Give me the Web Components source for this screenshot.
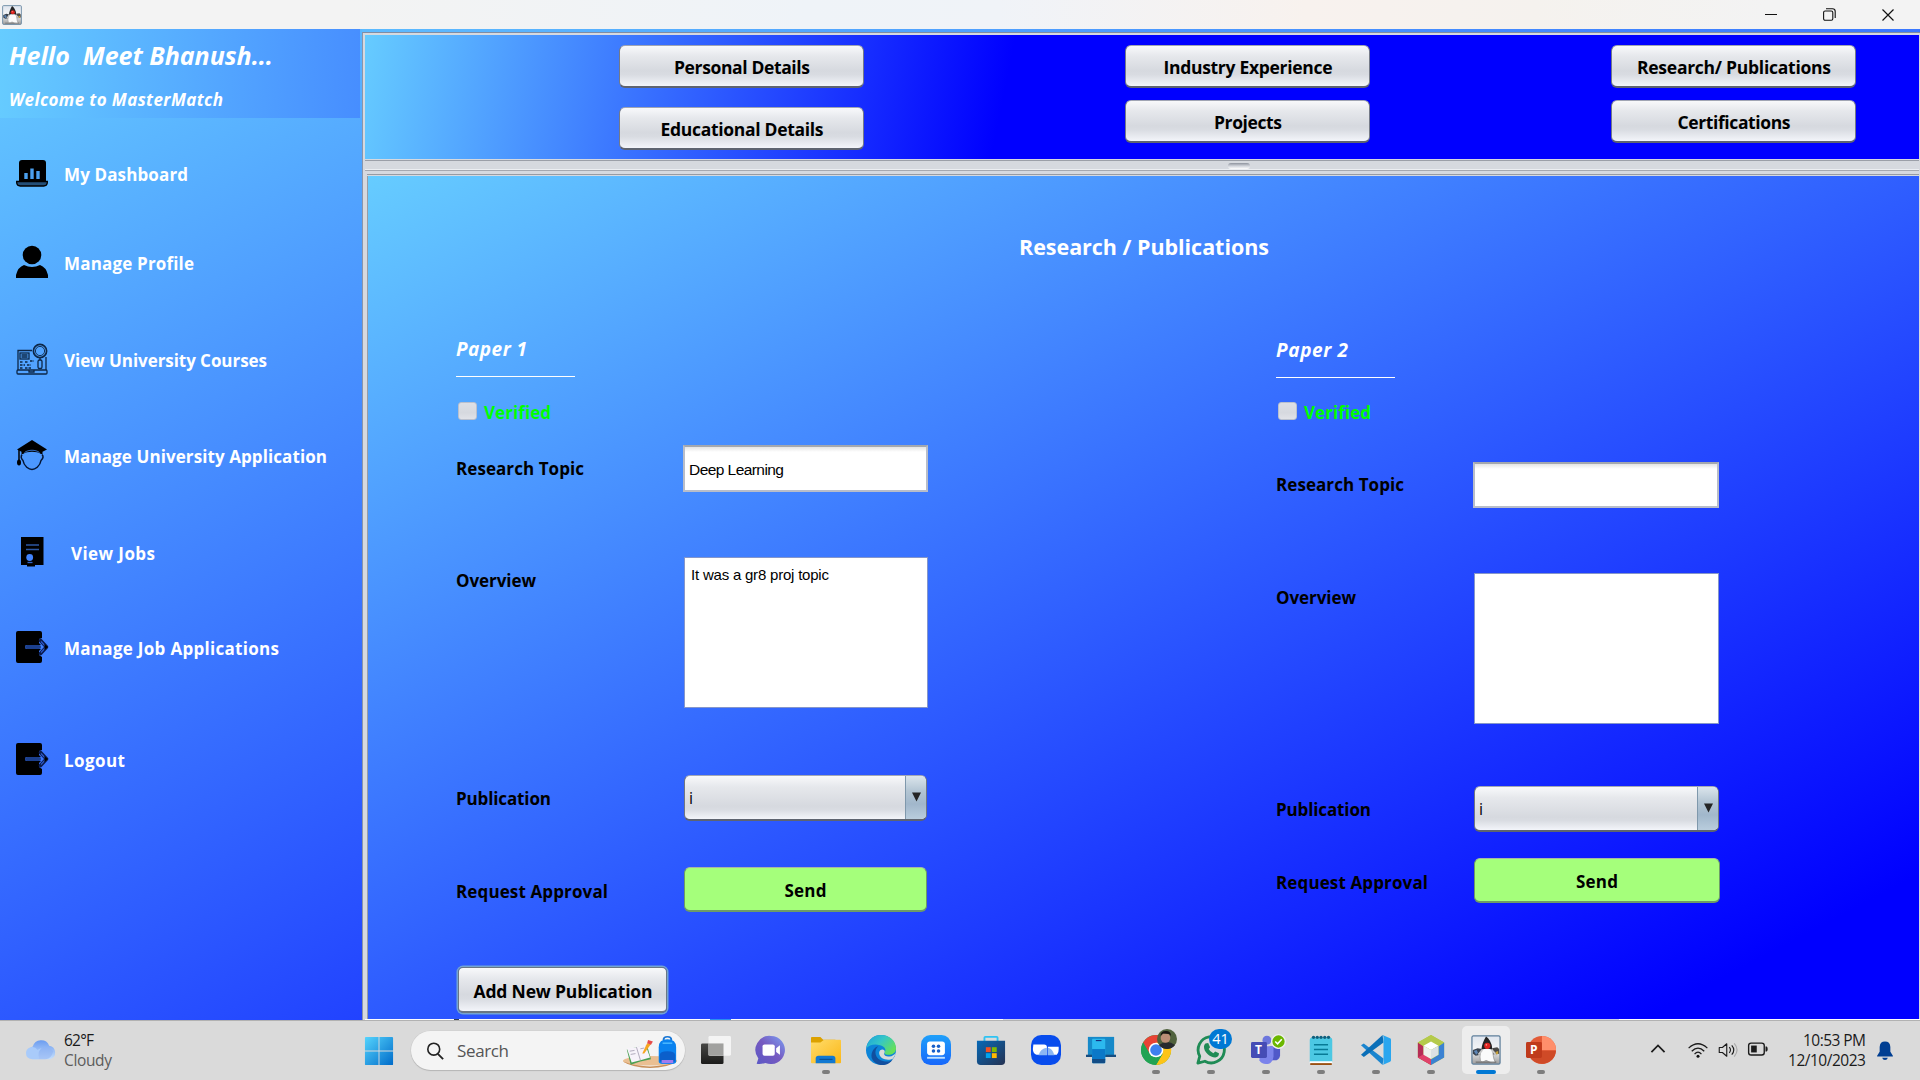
<!DOCTYPE html>
<html lang="en">
<head>
<meta charset="utf-8">
<title>MasterMatch</title>
<style>
html,body{margin:0;padding:0}
body{width:1920px;height:1080px;overflow:hidden;font-family:"Open Sans","Noto Sans",sans-serif;background:#dadada}
</style>
</head>
<body>
<master-app></master-app>
<script>
const define = (name, html, after) => customElements.define(name, class extends HTMLElement {
  connectedCallback() {
    if (this.shadowRoot) return;
    const t = document.createElement('template');
    t.innerHTML = typeof html === 'function' ? html(this) : html;
    this.attachShadow({mode: 'open'}).appendChild(t.content.cloneNode(true));
    if (after) after(this);
  }
});

/* Text run whose letter spacing is tuned so that it spans the given width. */
define('fit-text', '<style>:host{display:block;white-space:pre;line-height:24px;flex:none}span{display:inline-block}</style><span><slot></slot></span>', el => {
  const span = el.shadowRoot.querySelector('span');
  const w = +el.getAttribute('w');
  const n = el.textContent.length;
  const nat = span.getBoundingClientRect().width;
  if (n > 1) span.style.letterSpacing = ((w - nat) / (n - 1)) + 'px';
  el.style.width = w + 'px';
});

const duke = `<defs><linearGradient id="dk" x1="0" y1="0" x2="0" y2="1"><stop offset="0" stop-color="#dfe5ee"/><stop offset=".5" stop-color="#f4f5f6"/><stop offset="1" stop-color="#9b9b9b"/></linearGradient></defs>
<rect x="1" y="1" width="30" height="30" rx="1.500" fill="url(#dk)" stroke="#5e7f9b" stroke-width="1.300"/>
<path d="M2 16l5-2 5 1-2 6-5 1-3-2z" fill="#39434f"/><path d="M22 14l6-1 2 2v5l-6 1z" fill="#4b4a47"/>
<path d="M3 17l3-1 1.500 3-2 2z" fill="#5d86b5"/><path d="M26 18l3-1v3l-2 1z" fill="#c9a23a"/>
<path d="M12 13c-2 5-3 9-2 14 2 3 4 1 6 0 3 1 6 4 10 2-3-4-2-11-4-16z" fill="#fbfbfb" stroke="#8c8c8c" stroke-width=".7"/>
<path d="M12 16l-4 5M22 16l3 3 2 4" stroke="#c9c9c9" stroke-width="2" fill="none"/>
<path d="M16 1.500c2 1 5 5 6 9 .6 2 .5 4 .3 5-3-1-7-1-11 0 0-5 2-9 4.700-14z" fill="#232323"/>
<circle cx="17.300" cy="11.500" r="3.300" fill="#de241f"/><circle cx="16.400" cy="10.500" r=".9" fill="#ff8d80"/><path d="M5 29h22" stroke="#666" stroke-width="1.500" opacity=".7"/>`;

const exit = `<path d="M2 0h22q2 0 2 2v5l-3 1v4l2 2H10q-2 2 0 4h15l-2 2v4l3 2v4q0 2-2 2H2q-2 0-2-2V2q0-2 2-2z" fill="#000"/>
<rect x="9" y="14" width="16" height="4" rx="2" fill="#1c3f8c"/><path d="M24.500 9.500L30.500 16l-6 6.500" fill="none" stroke="#0a1a4d" stroke-width="3.600" stroke-linecap="round" stroke-linejoin="round"/><path d="M25 10.500L30 16l-5 5.500" fill="none" stroke="#2b57c8" stroke-width="1.200"/><path d="M28.500 13l3.500 3-3.500 3z" fill="#000"/>`;

const icons = {
 duke,
 exit,
 dash: `<path d="M6 3h21q3 0 3 3v18H3V6q0-3 3-3z" fill="#000"/><path d="M10 16v6M16 11.500v10.500M22 14v8" stroke="#4ba0ef" stroke-width="3.400"/><path d="M.7 24.500h30.600v1.500q-.5 3-3.500 3H4.200q-3 0-3.500-3z" fill="#234f78" stroke="#000" stroke-width="1.300"/>`,
 user: `<circle cx="16" cy="9" r="9.300" fill="#000"/><path d="M0 32v-3q2-8 8-10 8 4 16 0 6 2 8 10v3z" fill="#000"/>`,
 courses: `<g fill="none" stroke="#0d2747" stroke-width="1.300"><path d="M2 27V7.500h14M30 14v13"/><rect x="4" y="10" width="9" height="6"/><path d="M5.500 12h6M5.500 14h6" /><path d="M4 19h3M9 19h3M14 18h4M4 22h5M11 22h4M4 25h3M9 25h6" stroke-dasharray="2.500 1"/><rect x="1" y="27" width="30" height="4" rx="1"/><path d="M13 27v2h5v-2"/><circle cx="24" cy="8" r="6.600" stroke-width="1.700"/><circle cx="24" cy="8" r="4.600" stroke-width=".9"/><path d="M24 15v2"/><rect x="22" y="17" width="4" height="8.500" rx="1.600"/></g>`,
 grad: `<path d="M16 1L31 10.500l-4.500 2.200V15H25c-4-3-14-3-18 0H5.500v-2.200L1 10.500z" fill="#000"/><path d="M8.500 13.500c4-3 11-3 15 0" stroke="#4188f0" stroke-width=".8" fill="none"/><path d="M6 15.500c-2 3 0 5 1 6 1 6 6 9 9 9s8-3 9-9c2-2 3-4 1-6" fill="none" stroke="#041535" stroke-width="1.500"/><path d="M3 11v11" stroke="#000" stroke-width="1.500"/><ellipse cx="3" cy="23.500" rx="2" ry="3" fill="#000"/>`,
 cert: `<path d="M5 1h22.500v28H19v1.500h-8V29H5z" fill="#000"/><path d="M10 9h13M10 13.500h13" stroke="#2c57a3" stroke-width="1.500"/><circle cx="13.700" cy="21.500" r="3.400" fill="#4184ff"/><path d="M11.500 26.500h5" stroke="#3466c5" stroke-width="1.300"/>`,
 cloud: `<defs><linearGradient id="cl" x1="0" y1="0" x2="0" y2="1"><stop offset="0" stop-color="#6b9cf0"/><stop offset="1" stop-color="#c4defc"/></linearGradient></defs><path d="M8 26a7 7 0 0 1 0-13 9 9 0 0 1 17-1 7.200 7.200 0 0 1 1 14z" fill="url(#cl)"/><path d="M1 19.500a6.500 6.500 0 0 1 12-3q2-2 4-1.500-4 2-3 11H8q-7-.5-7-6.500z" fill="#a9cbfa"/><path d="M14 22q0-8 8-8 5 0 7 4-2 8-8 8h-7z" fill="#8fb3f2" opacity=".55"/>`,
 start: `<defs><linearGradient id="st" x1="0" y1="0" x2="1" y2="1"><stop offset="0" stop-color="#55d4fd"/><stop offset="1" stop-color="#006bc9"/></linearGradient></defs><path d="M2 1h13.500v14.500H1V2q0-1 1-1zM16.500 1H30q1 0 1 1v13.500H16.500zM1 16.500h14.500V31H2q-1 0-1-1zM16.500 16.500H31V30q0 1-1 1H16.500z" fill="url(#st)"/>`,
 lens: `<circle cx="14" cy="13" r="9.500" fill="none" stroke="#222" stroke-width="2.600"/><path d="M20.500 20.500L29 29" stroke="#222" stroke-width="3"/>`,
 task: `<defs><linearGradient id="tv" x1="0" y1="0" x2="0" y2="1"><stop offset="0" stop-color="#474745"/><stop offset="1" stop-color="#1b1b1a"/></linearGradient></defs><rect x="0" y="9" width="24" height="22" rx="1.500" fill="url(#tv)"/><rect x="8" y="1" width="24" height="21" rx="1.500" fill="#f4f4f4"/><path d="M8 9h16v13H8z" fill="#a1a19f"/>`,
 chat: `<defs><linearGradient id="ch" x1="1" y1="0" x2="0" y2="1"><stop offset="0" stop-color="#7ba0f4"/><stop offset=".5" stop-color="#7659c0"/><stop offset="1" stop-color="#5a58c6"/></linearGradient></defs><path d="M16 1a15 15 0 1 1-6 28.800Q5 31.500.7 30.700L2.500 25A15 15 0 0 1 16 1z" fill="url(#ch)"/><rect x="7" y="10" width="13" height="12" rx="2" fill="#fff"/><path d="M21.500 14l4-3v10l-4-3z" fill="#fff"/>`,
 folder: `<defs><linearGradient id="fo" x1="0" y1="0" x2="1" y2="1"><stop offset="0" stop-color="#ffdc6b"/><stop offset="1" stop-color="#fbb717"/></linearGradient></defs><path d="M0 3q0-1 1-1h9l3 3h13v6H0z" fill="#dca100"/><path d="M0 8h10l4-3h17q1 0 1 1v23q0 1-1 1H1q-1 0-1-1z" fill="url(#fo)"/><path d="M5 30v-5q0-3 3-3h15q3 0 3 3v5z" fill="#1279d2"/><path d="M9 26h14" stroke="#0a4f96" stroke-width="1.200"/>`,
 edge: `<defs><linearGradient id="ed" x1="0" y1="0" x2="1" y2=".6"><stop offset="0" stop-color="#1aa0dc"/><stop offset=".5" stop-color="#35c6c7"/><stop offset="1" stop-color="#65e05a"/></linearGradient></defs><circle cx="16" cy="16" r="16" fill="#0c84d8"/><path d="M1 11C4 3 10 0 16 0c9 0 16 6 16 14 0 5-4 7-8 7-4 0-5-2-4-3 2-2 0-6-5-7C9 9 3 11 .5 14z" fill="url(#ed)"/><path d="M13 12c-5 4-4 14 6 16 5 1 8 0 10-3-5 10-20 9-23-1-1-6 3-11 7-12z" fill="#114f9f"/><path d="M20 18c-2 3 1 5 5 5 3 0 5-2 7-4-1 3-2 4-3 6-5 3-15 1-15-6 0-4 6-5 6-1z" fill="#dadada"/>`,
 grid: `<defs><linearGradient id="gr" x1="0" y1="0" x2="0" y2="1"><stop offset="0" stop-color="#1fa0fa"/><stop offset="1" stop-color="#1767fb"/></linearGradient></defs><rect width="32" height="32" rx="10" fill="url(#gr)"/><rect x="6.500" y="7" width="19" height="14.500" rx="3" fill="#fff"/><g fill="#175fc9"><circle cx="13.300" cy="12" r="1.900"/><circle cx="18.700" cy="12" r="1.900"/><circle cx="13.300" cy="17" r="1.900"/><circle cx="18.700" cy="17" r="1.900"/></g><path d="M6.500 24.300h19" stroke="#bfe0ff" stroke-width="2"/>`,
 store: `<defs><linearGradient id="so" x1="0" y1="0" x2="1" y2="1"><stop offset="0" stop-color="#0669b7"/><stop offset="1" stop-color="#253252"/></linearGradient></defs><path d="M9 8V3q0-1 1-1h12q1 0 1 1v5" fill="none" stroke="#2fc3f3" stroke-width="2"/><path d="M1 6h30v22q0 4-4 4H5q-4 0-4-4z" fill="url(#so)"/><path d="M10.500 13h5.200v5.200h-5.200z" fill="#f25022"/><path d="M16.900 13h5.200v5.200h-5.200z" fill="#7fba00"/><path d="M10.500 19.400h5.200v5.200h-5.200z" fill="#00a4ef"/><path d="M16.900 19.400h5.200v5.200h-5.200z" fill="#ffb900"/>`,
 zoomer: `<rect width="32" height="32" rx="11" fill="#084ced"/><path d="M2.500 10H14q3 0 3 3v8H6q-4-1-4-6zM18 12.500h11.500q.5 6-2 8.500H18z" fill="#fff"/><path d="M8 21.500q2-7 9-8v8zM18 13.500q5 1 7 8h-7z" fill="#8bb6f3"/>`,
 phone: `<path d="M2 2h28v20H2z" fill="#1689c9"/><path d="M0 21h32v2.500H0z" fill="#174d80"/><path d="M6.500 5q0-1 1-1h12q1 0 1 1v24q0 1-1 1h-12q-1 0-1-1z" fill="#2cb9ee"/><path d="M6.500 15h14v12h-14z" fill="#0b78c8"/><path d="M6.500 25.500h14V29q0 1-1 1h-12q-1 0-1-1z" fill="#124c86"/><path d="M10.500 6h6" stroke="#116" stroke-width="1"/>`,
 chrome: `<circle cx="16" cy="16" r="16" fill="#21a353"/><path d="M16 16L2.200 8A16 16 0 0 1 30 8z" fill="#e94335"/><path d="M16 8h14A16 16 0 0 1 16 32l7-12z" fill="#fdc418"/><path d="M2.200 8l7 12 6.800-12z" fill="#e94335"/><path d="M2.200 8A16 16 0 0 0 16 32l7-12H9.200z" fill="#21a353"/><circle cx="16" cy="16" r="7.800" fill="#fff"/><circle cx="16" cy="16" r="6.200" fill="#3d80ee"/>`,
 whatsapp: `<path d="M2 30l2-7.500A14 14 0 1 1 9.500 28z" fill="none" stroke="#1f8b55" stroke-width="3" stroke-linejoin="round"/><path d="M10 9l3-.5 2 4.500-1.500 2q1.500 3 5 4.500l2-2 4 2q0 4-4 4.500C15 24 8 18 8.500 12q.3-2 1.500-3z" fill="#1f8b55"/>`,
 teams: `<circle cx="17" cy="5.500" r="4.800" fill="#6d77dd"/><path d="M20 12h9q2 0 2 2v8q-1 5-6 5h-5z" fill="#5059c9"/><path d="M10 12h14v11q-1 8-8 8-5 0-7-4z" fill="#7b83eb"/><rect x="0" y="7.500" width="17" height="17" rx="1.500" fill="#454cb5"/>`,
 notepad: `<rect x="4" y="3" width="24" height="27" rx="2" fill="#4cc8e3"/><path d="M4 28h24v2q-1 1-2 1H6q-2 0-2-1z" fill="#fff"/><path d="M4.500 31h23" stroke="#9a5011" stroke-width="2"/><g fill="#0f607d"><circle cx="8" cy="2.500" r="1.800"/><circle cx="12" cy="2.500" r="1.800"/><circle cx="16" cy="2.500" r="1.800"/><circle cx="20" cy="2.500" r="1.800"/><circle cx="24" cy="2.500" r="1.800"/></g><path d="M8.500 10.500h15M8.500 15.500h15M8.500 20.500h15" stroke="#077a96" stroke-width="1.600"/>`,
 code: `<path d="M0 11l3-2 21 16-1 7z" fill="#1a85cf"/><path d="M0 21l3 2.500L24 8l-1-8z" fill="#0a6fb8"/><path d="M23 0l8 3.500q1 .5 1 1.500v22q0 1-1 1.500L23 32q1-1 1-2V2q0-1-1-2z" fill="#29a6ef"/>`,
 netbeans: `<path d="M16 0l14 8v16l-14 8-14-8V8z" fill="#a6c83c"/><path d="M2 8l6 4v9l8 5v6L2 24z" fill="#b52d55"/><path d="M8 20.500l8 5V32L2 24z" fill="#e0426a"/><path d="M30 8v16l-14 8v-6l8-5v-9z" fill="#3b82d2"/><path d="M16 0l14 8-6 4-8-4-8 4-6-4z" fill="#b5ca4b"/><path d="M16 7l8 4.500L16 16 8 11.500z" fill="#fff"/><path d="M8 11.500l8 4.500v9.500l-8-4.500z" fill="#eef1ec"/><path d="M24 11.500L16 16v9.500l8-4.500z" fill="#dce1e4"/>`,
 ppt: `<circle cx="17" cy="16" r="15" fill="#e25b37"/><path d="M17 1a15 15 0 0 1 15 15H17z" fill="#ff8f6b"/><path d="M2.500 17H32a15 15 0 0 1-29 4z" fill="#cf4a27"/><rect x="0" y="7.500" width="17" height="17" rx="1.500" fill="#bf3a1b"/>`,
 school: `<ellipse cx="30" cy="31" rx="28" ry="6" fill="#eabf92"/><path d="M2 32q28 12 56 0-10 8-28 8T2 32z" fill="#c98f58"/><path d="M6 17l10-3 11-2 4 17-11 3-10 4z" fill="#4aa052"/><path d="M6 15l10-1 9-4 5 17-9 3-10 3z" fill="#f7f3fa"/><path d="M16 14l4 16M9 19l5-1M10 23l5-1M20 16l4-1" stroke="#a9a3b5"/><path d="M22 22l5-13 4 1-7 12z" fill="#f6a520"/><path d="M27 9l1-4 5 2-2 4z" fill="#e74c4b"/><path d="M44 5q0-4 4-4t4 4" fill="none" stroke="#1976d4" stroke-width="2"/><path d="M39 14q0-10 9-10t9 10v18q0 3-4 3H43q-4 0-4-3z" fill="#0a82ef"/><path d="M40 24q0-5 8-5t8 5v8H40z" fill="#0b5fcb"/><path d="M42 30h12v4H42z" fill="#a07cf0"/><path d="M43 9h10" stroke="#45b5ff" stroke-width="2"/>`,
 wifi: `<g fill="none" stroke="#1b1b1b" stroke-width="2"><path d="M1 13q15-14 30 0M6 18q10-10 20 0M10.500 22.500q5.500-6 11 0"/></g><circle cx="16" cy="26" r="2.400" fill="#111"/>`,
 speaker: `<g fill="none" stroke="#1b1b1b" stroke-width="1.800"><path d="M2 12h5l7-6v20l-7-6H2z" stroke-linejoin="round"/><path d="M18 11.500q4 4.500 0 9M22 8.500q6.500 7.500 0 15"/><path d="M26 5.500q9 10.500 0 21" stroke="#aaa"/></g>`,
 battery: `<rect x="1" y="6.500" width="25" height="19" rx="4" fill="none" stroke="#1b1b1b" stroke-width="2.200"/><rect x="5" y="10.500" width="9" height="11" fill="#1b1b1b"/><path d="M28 12h2q1.500 1 1.500 4t-1.500 4h-2z" fill="#1b1b1b"/>`,
 bell: `<path d="M16 1q9 0 9.500 9v8l4.500 7v1H2v-1l4.500-7v-8Q7 1 16 1z" fill="#003e92"/><path d="M11 28h10q-1 4-5 4t-5-4z" fill="#003e92"/>`,
 chevron: `<path d="M1 23L16 8l15 15" fill="none" stroke="#1b1b1b" stroke-width="4"/>`
};

define('app-icon', el => `<style>:host{display:block;flex:none;width:${el.getAttribute('w')}px;height:${el.getAttribute('h') || el.getAttribute('w')}px}svg{display:block;width:100%;height:100%;overflow:visible}</style>
<svg viewBox="${el.getAttribute('box') || '0 0 32 32'}" preserveAspectRatio="none">${icons[el.getAttribute('name')]}</svg>`);

define('title-bar', `<style>:host{display:flex;height:29px;box-sizing:border-box;padding:0 26px 0 2px;align-items:center;background:linear-gradient(90deg,#f3f3f3 0,#f3f3f3 18%,#eff3f8 42%,#f0f3f8 52%,#f8f2ee 68%,#f5f2ee 80%,#f3f3f3 92%)}
.sp{flex:1}svg{display:block;margin-left:46px}svg.first{margin-left:0}</style>
<app-icon name="duke" w="20"></app-icon><div class="sp"></div>
<svg class="first" width="12" height="12"><path d="M0 5.500h12" stroke="#111"/></svg>
<svg width="13" height="13" fill="none" stroke="#111" stroke-width="1.100"><rect x=".6" y="3" width="9.200" height="9.200" rx="1.500"/><path d="M3 .7h6.500q2.700 0 2.700 2.700V10"/></svg>
<svg width="12" height="12" stroke="#111" stroke-width="1.200"><path d="M.5.5l11 11M11.500.5l-11 11"/></svg>`);

define('nav-item', el => `<style>:host{display:flex;height:32px;align-items:center;color:#fff;font-weight:700;font-size:17px}fit-text{margin-top:4px}</style>
<app-icon name="${el.getAttribute('icon')}" w="32"></app-icon><fit-text style="margin-left:${el.getAttribute('gap') || 16}px" w="${el.getAttribute('w')}">${el.getAttribute('label')}</fit-text>`);

define('side-bar', `<style>:host{display:flex;flex-direction:column;width:362px;height:991px;box-sizing:border-box;background:linear-gradient(152.230deg,#66ccff 0,#0000ff 1550px)}
header{width:360px;height:89px;box-sizing:border-box;padding:3px 0 0 9px;color:#fff;font-weight:700;font-style:italic;background:linear-gradient(94.200deg,#66ccff 0,#0000ff 1193px)}
nav{display:flex;flex-direction:column;padding:39px 0 0 16px}</style>
<header><fit-text w="264" style="font-size:25px;line-height:46px">Hello  Meet Bhanush...</fit-text><fit-text w="214" style="font-size:17px;margin-top:10px">Welcome to MasterMatch</fit-text></header>
<nav>
<nav-item icon="dash" label="My Dashboard" w="124"></nav-item>
<nav-item icon="user" label="Manage Profile" w="130" style="margin-top:57px"></nav-item>
<nav-item icon="courses" label="View University Courses" w="203" style="margin-top:65px"></nav-item>
<nav-item icon="grad" label="Manage University Application" w="263" style="margin-top:64px"></nav-item>
<nav-item icon="cert" gap="23" label="View Jobs" w="84" style="margin-top:65px"></nav-item>
<nav-item icon="exit" label="Manage Job Applications" w="215" style="margin-top:63px"></nav-item>
<nav-item icon="exit" label="Logout" w="61" style="margin-top:80px"></nav-item>
</nav>`);

define('metal-button', el => `<style>:host{display:flex;box-sizing:border-box;justify-content:center;align-items:center;width:245px;height:43px;border-radius:6px;border:1px solid #747a88;border-top-color:#a0a5b3;border-bottom:2px solid #5e6470;background:linear-gradient(#f8f9fb,#e6e8ec 25%,#d6d9df 62%,#d9dce2 72%,#f3f5fa);color:#000;font-weight:700;font-size:17.500px}
:host([green]){background:#a5ff7b;border-color:#6d9b67;border-top-color:#a6b6a6;font-size:17px}
:host([focus]){border-color:#6a7784;box-shadow:0 0 0 1.500px #73a4d1;border-radius:5px}
fit-text{margin:2px 0 0 1px}:host([green]) fit-text{margin-top:3px;margin-left:0}</style><fit-text w="${el.getAttribute('w')}">${el.getAttribute('label')}</fit-text>`);

define('section-tabs', `<style>:host{display:flex;box-sizing:border-box;height:124px;padding:10px 0 0 254px;background:linear-gradient(101.500deg,#66ccff 0,#0000ff 638px)}
.c{display:flex;flex-direction:column;gap:12px;flex:none}</style>
<div class="c" style="gap:19px"><metal-button label="Personal Details" w="136"></metal-button><metal-button label="Educational Details" w="163"></metal-button></div>
<div class="c" style="margin-left:261px"><metal-button label="Industry Experience" w="169"></metal-button><metal-button label="Projects" w="68"></metal-button></div>
<div class="c" style="margin-left:241px"><metal-button label="Research/ Publications" w="194"></metal-button><metal-button label="Certifications" w="113"></metal-button></div>`);

define('combo-box', `<style>:host{display:flex;box-sizing:border-box;width:243px;height:46px;border:1px solid #6f7683;border-top-color:#a3a8b5;border-bottom:2px solid #5e6470;border-radius:6px;overflow:hidden;background:linear-gradient(#f8f9fb,#e6e8ec 25%,#d6d9df 70%,#d9dce2 78%,#f3f5fa)}
.v{flex:1;padding:11px 0 0 4px;font:16px/23px "Open Sans",sans-serif;color:#000}
.a{width:20px;border-left:1px solid #7f98ac;background:linear-gradient(#dbe5ec,#b3c5d3 35%,#a1b7cb 65%,#b9cddd)}
svg{display:block;margin:16px 0 0 6px}</style><div class="v"><slot></slot></div><div class="a"><svg width="10" height="10"><path d="M0 .5h9L4.500 9.500z" fill="#252525"/></svg></div>`);

define('text-field', `<style>:host{display:block;box-sizing:border-box;width:245px;height:47px;padding:12px 0 0 4px;border:2px solid #b8bdc9;border-top-color:#a3a7ae;background:linear-gradient(#e4e4e4,#fff 5px);color:#000;font:15.500px/22px "Liberation Sans",sans-serif}
:host([area]){width:244px;height:151px;padding:8px 0 0 6px;border:1px solid #7888b8;outline:1px solid #93a7de77;outline-offset:-1px;background:#fff;font-size:15px}</style><slot></slot>`);

define('form-row', el => `<style>:host{display:flex;align-items:${el.hasAttribute('top') ? 'flex-start' : 'center'}}.l{flex:none;width:var(--label);font-weight:700;font-size:17px;color:#000}
.l fit-text{margin-top:${el.getAttribute('dy') || 0}px}</style><div class="l"><fit-text w="${el.getAttribute('w')}">${el.getAttribute('label')}</fit-text></div><slot></slot>`);

define('check-mark', `<style>:host{display:flex;height:18px;align-items:center;padding-left:2px;color:#0f0;font-weight:700;font-size:17px}
i{width:19px;height:18px;box-sizing:border-box;border-radius:3px;border:1px solid #b9c0ce;background:linear-gradient(#dddfe5,#d6d9df 60%,#e0e2e8)}fit-text{margin:3px 0 0 7px}</style><i></i><fit-text w="67">Verified</fit-text>`);

define('paper-card', el => { const m = el.getAttribute('gaps').split(','); const right = el.hasAttribute('second'); return `<style>:host{display:flex;flex-direction:column;flex:none}
.t{color:#fff;font-weight:700;font-style:italic;font-size:19px;padding-top:1px}.t fit-text{line-height:28px}
hr{width:119px;height:1px;border:0;background:#fff;margin:0;margin-top:13px}</style>
<div class="t"><fit-text w="${right ? 72 : 71}">${el.getAttribute('name')}</fit-text></div><hr><check-mark style="margin-top:${m[0]}px"></check-mark>
<form-row label="Research Topic" w="128" style="margin-top:${m[1]}px"><text-field style="${right ? 'width:246px;height:46px' : ''}">${el.getAttribute('topic') ? `<fit-text w="95" style="line-height:22px">${el.getAttribute('topic')}</fit-text>` : ''}</text-field></form-row>
<form-row top dy="${right ? 13 : 12}" label="Overview" w="80" style="margin-top:${m[2]}px"><text-field area style="margin-left:1px;${right ? 'width:245px' : ''}">${el.getAttribute('overview') ? `<fit-text w="138" style="line-height:18px">${el.getAttribute('overview')}</fit-text>` : ''}</text-field></form-row>
<form-row dy="2" label="Publication" w="95" style="margin-top:${m[3]}px"><combo-box style="margin-left:1px;${right ? 'width:245px' : ''}">i</combo-box></form-row>
<form-row dy="4" label="Request Approval" w="152" style="margin-top:${m[4]}px"><metal-button green label="Send" w="42" style="margin-left:1px;width:${right ? 246 : 243}px;height:45px"></metal-button></form-row>`; });

define('publications-panel', `<style>:host{display:flex;flex-direction:column;box-sizing:border-box;height:843px;overflow:hidden;padding-left:88px;background:linear-gradient(152.230deg,#66ccff 0,#0000ff 1341px)}
.h{color:#fff;font-weight:700;font-size:21.500px;margin:56px 0 0 563px}
.h fit-text{line-height:30px}
.cols{display:flex;align-items:flex-start;margin-top:72px;height:633px}
</style>
<div class="h"><fit-text w="250">Research / Publications</fit-text></div>
<div class="cols"><paper-card name="Paper 1" topic="Deep Learning" overview="It was a gr8 proj topic" gaps="25,25,65,67,46" style="--label:227px;width:820px"></paper-card>
<paper-card second name="Paper 2" gaps="24,42,65,62,26" style="--label:197px;margin-top:1px"></paper-card></div>
<metal-button focus label="Add New Publication" w="179" style="width:209px;height:46px;margin-left:2px;flex:none"></metal-button>`);

define('split-pane', `<style>:host{display:flex;flex-direction:column;box-sizing:border-box;width:1558px;height:991px;padding-top:3px;background:linear-gradient(90deg,#5cbaff,#3a78ff)}
.f{display:flex;flex-direction:column;flex:1;box-sizing:border-box;border-left:1px solid #8995ab;border-top:1px solid #7f8da6;background:#d6d9df;padding:2px 1px 0 2px}
.d{display:flex;flex-direction:column;align-items:center;height:17px;box-sizing:border-box}
.d .a{width:100%;height:1px;background:#9b9fa8;margin-top:1px}.d .g{width:22px;height:6px;margin:2px 0 0 193px;border-radius:3px;background:linear-gradient(#8e939e,#d0d3da 50%,#fff)}
.d .b{width:100%;height:1px;background:#a5a8b0;box-shadow:0 -1px #eceef2;margin-top:1px}
.d .c{height:1px;background:#979ba4;margin:3px 0 0 2px;width:calc(100% - 2px)}
.m{border-left:1px solid #989ca5;margin-left:2px}
.z{height:1px;margin-right:-1px;background:linear-gradient(90deg,#fff 0 89px,#333c50 89px 94px,#fff 94px 345px,#2a8ef0 345px 366px,#fff 366px 638px,#ccd2e6 638px 1254px,#fff 1254px)}</style>
<div class="f"><section-tabs></section-tabs><div class="d"><div class="a"></div><div class="g"></div><div class="b"></div><div class="c"></div></div><div class="m"><publications-panel></publications-panel></div><div class="z"></div></div>`);

define('task-item', el => `<style>:host{display:flex;flex-direction:column;align-items:center;width:55px;height:60px;flex:none;position:relative}
.t{display:flex;flex-direction:column;align-items:center;width:48px;height:48px;box-sizing:border-box;margin-top:6px;padding-top:9px;border-radius:5px}
:host([active]) .t{background:#ededed}
i{display:block;width:8px;height:4px;border-radius:2px;background:#7d7d7d;margin-top:5px}
:host([active]) i{width:20px;background:#0078d4}:host([quiet]) i{visibility:hidden}
::slotted(*){position:absolute}</style><div class="t"><app-icon name="${el.getAttribute('icon')}" w="30"></app-icon><i></i></div><slot></slot>`);

define('task-bar', `<style>:host{display:flex;box-sizing:border-box;height:60px;border-top:1px solid #b2b2b2;background:#dadada;align-items:flex-start;color:#1a1a1a;font-size:15.500px}
.w{display:flex;width:364px;padding:9px 0 0 25px;box-sizing:border-box}.w app-icon{margin-top:4px}.w div{margin:0 0 0 8px}.w fit-text,.clk fit-text{line-height:20px}
.start{margin-top:15px}
.s{display:flex;align-items:center;width:274px;height:39px;margin:10px 0 0 17px;border-radius:20px;background:#f4f4f4;box-shadow:0 1px 1px #b5b5b5,0 0 0 .5px #ccc;padding-left:14px;box-sizing:border-box;color:#555;font-size:17px}
.apps{display:flex;margin:-1px 0 0 3px}
.tray{display:flex;flex:1}
.n{width:23px;height:20px;border-radius:10px;background:#0078d4;color:#fff;font-size:14.500px;line-height:20px;text-align:center;left:26px;top:9px}
.face{width:20px;height:20px;left:29px;top:9px}.ok{width:15px;height:15px;left:33px;top:14px}
.T{color:#fff;font-weight:700;font-size:12px;line-height:16px;left:17px;top:22px}</style>
<div class="w"><app-icon name="cloud" w="31"></app-icon><div><fit-text w="30">62°F</fit-text><fit-text w="48" style="color:#5c5c5c">Cloudy</fit-text></div></div>
<app-icon class="start" name="start" w="30"></app-icon>
<div class="s"><app-icon name="lens" w="20"></app-icon><fit-text w="52" style="margin-left:12px">Search</fit-text><app-icon name="school" w="59" h="32" box="0 0 61 40" style="margin:3px 0 0 112px"></app-icon></div>
<div class="apps">
<task-item icon="task" quiet></task-item><task-item icon="chat" quiet></task-item><task-item icon="folder"></task-item><task-item icon="edge" quiet></task-item><task-item icon="grid" quiet></task-item><task-item icon="store" quiet></task-item><task-item icon="zoomer" quiet></task-item><task-item icon="phone" quiet></task-item>
<task-item icon="chrome"><svg class="face" viewBox="0 0 20 20"><circle cx="10" cy="10" r="10" fill="#50623d"/><path d="M2 16q8-6 16 0-3 4-8 4t-8-4z" fill="#272a2e"/><circle cx="8.500" cy="9" r="4.800" fill="#bb8d75"/><path d="M3.500 7q0-5 5.500-5 5 0 5 5l-2-2-6-.500z" fill="#181512"/></svg></task-item>
<task-item icon="whatsapp"><span class="n">41</span></task-item>
<task-item icon="teams"><span class="T">T</span><svg class="ok" viewBox="0 0 16 16"><circle cx="8" cy="8" r="7.300" fill="#6bb700" stroke="#eee" stroke-width="1.500"/><path d="M4.500 8l2.500 2.500 4.500-5" fill="none" stroke="#fff" stroke-width="1.600"/></svg></task-item>
<task-item icon="notepad"></task-item><task-item icon="code"></task-item><task-item icon="netbeans"></task-item><task-item icon="duke" active></task-item>
<task-item icon="ppt"><span class="T">P</span></task-item></div>
<div class="tray"><app-icon name="chevron" w="14" style="margin:21px 0 0 83px"></app-icon><app-icon name="wifi" w="20" style="margin:19px 0 0 23px"></app-icon><app-icon name="speaker" w="20" style="margin:19px 0 0 10px"></app-icon><app-icon name="battery" w="20" h="20" style="margin:18px 0 0 10px"></app-icon>
<div class="clk" style="margin:9px 0 0 20px;width:79px"><fit-text w="63" style="margin-left:15px">10:53 PM</fit-text><fit-text w="78">12/10/2023</fit-text></div><app-icon name="bell" w="18" h="19" style="margin:20px 0 0 9px"></app-icon></div>`);

define('master-app', `<style>:host{display:flex;flex-direction:column;width:1920px;height:1080px}.b{display:flex;height:991px}</style>
<title-bar></title-bar><div class="b"><side-bar></side-bar><split-pane></split-pane></div><task-bar></task-bar>`);
</script>
</body>
</html>
